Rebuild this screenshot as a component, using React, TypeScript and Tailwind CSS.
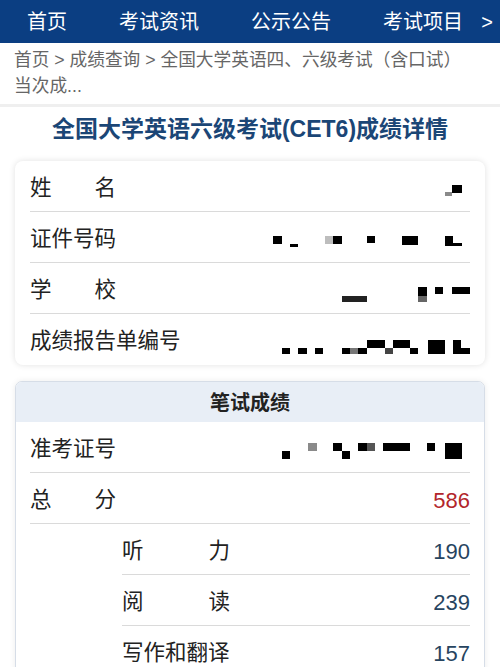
import React from "react";

type Block = [number, number, number, number, string?];

const nav = ["首页", "考试资讯", "公示公告", "考试项目"];

// pixelated (masked) values, coords inside a 200x24 box
const masks: Record<string, Block[]> = {
  name: [
    [175, 16, 7, 4, "#8a8a8a"],
    [182, 9, 10, 8],
  ],
  id: [
    [3, 9, 9, 8],
    [20, 17, 8, 3],
    [55, 9, 8, 8, "#bdbdbd"],
    [63, 9, 9, 8],
    [97, 9, 8, 7],
    [132, 9, 16, 9],
    [175, 9, 8, 10],
    [183, 16, 9, 3],
  ],
  school: [
    [72, 18, 25, 6, "#222"],
    [148, 9, 9, 9],
    [148, 18, 9, 6, "#666"],
    [165, 9, 8, 7],
    [182, 9, 18, 7],
  ],
  report: [
    [12, 18, 8, 7],
    [28, 18, 9, 7],
    [45, 18, 8, 7],
    [72, 18, 8, 7],
    [80, 18, 8, 7, "#777"],
    [88, 18, 9, 7],
    [97, 10, 18, 8],
    [115, 18, 8, 7, "#444"],
    [123, 10, 17, 8],
    [140, 18, 8, 7],
    [158, 10, 17, 15],
    [183, 10, 8, 15],
    [191, 18, 9, 7],
  ],
  ticket: [
    [12, 14, 8, 8],
    [38, 6, 9, 8, "#8a8a8a"],
    [63, 6, 9, 8],
    [72, 14, 8, 8],
    [88, 6, 9, 8],
    [97, 6, 8, 8, "#555"],
    [113, 6, 27, 8],
    [157, 6, 8, 8],
    [175, 6, 17, 16],
  ],
};

function Mask({ blocks }: { blocks: Block[] }) {
  return (
    <svg width="200" height="24" viewBox="0 0 200 24" className="ml-auto shrink-0">
      {blocks.map(([x, y, w, h, c], i) => (
        <rect key={i} x={x} y={y} width={w} height={h} fill={c ?? "#000"} />
      ))}
    </svg>
  );
}

function Spread({ a, b, wide }: { a: string; b: string; wide?: boolean }) {
  return (
    <span className={wide ? "flex w-[108px] justify-between" : "flex w-[86px] justify-between"}>
      <span>{a}</span>
      <span>{b}</span>
    </span>
  );
}

function Row({ children, last }: { children: React.ReactNode; last?: boolean }) {
  return (
    <div
      className={
        "flex h-[51px] items-center pt-[4px] text-[21.5px] text-[#222] " +
        (last ? "" : "border-b border-[#dadada]")
      }
    >
      {children}
    </div>
  );
}

export default function App() {
  return (
    <div className="h-[667px] w-[500px] overflow-hidden bg-white font-['Liberation_Sans','Noto_Sans_CJK_SC',sans-serif]">
      {/* top nav */}
      <div className="flex h-[43px] items-center bg-[#0b3e82] pl-[27px] pr-[7px] text-[20px] text-white">
        <div className="flex gap-[52px]">
          {nav.map((n) => (
            <span key={n}>{n}</span>
          ))}
        </div>
        <span className="ml-auto">&gt;</span>
      </div>

      {/* breadcrumb */}
      <div className="px-[14px] pt-[4px] pb-[5px] text-[17.7px] leading-[26px] text-[#666]">
        <div className="whitespace-nowrap">首页 &gt; 成绩查询 &gt; 全国大学英语四、六级考试（含口试）</div>
        <div>当次成...</div>
      </div>
      <div className="h-[3px] bg-[#efefef]" />

      <h1 className="mt-[7px] mb-[17px] text-center text-[23px] font-bold leading-[30px] text-[#1b4676]">
        全国大学英语六级考试(CET6)成绩详情
      </h1>

      {/* personal info */}
      <div className="mx-[15px] rounded-[8px] bg-white px-[15px] shadow-[0_0_6px_rgba(0,0,0,0.12)]">
        <Row>
          <Spread a="姓" b="名" />
          <Mask blocks={masks.name} />
        </Row>
        <Row>
          <span>证件号码</span>
          <Mask blocks={masks.id} />
        </Row>
        <Row>
          <Spread a="学" b="校" />
          <Mask blocks={masks.school} />
        </Row>
        <Row last>
          <span>成绩报告单编号</span>
          <Mask blocks={masks.report} />
        </Row>
      </div>

      {/* written exam */}
      <div className="mx-[15px] mt-[16px] overflow-hidden rounded-[7px] border border-[#d6dde7] bg-white shadow-[0_0_6px_rgba(0,0,0,0.08)]">
        <div className="flex h-[40px] items-center justify-center bg-[#e8eef6] pt-[2px] text-[20px] font-bold text-[#222]">
          笔试成绩
        </div>
        <div className="px-[14px]">
          <Row>
            <span>准考证号</span>
            <Mask blocks={masks.ticket} />
          </Row>
          <Row>
            <Spread a="总" b="分" />
            <span className="ml-auto text-[22px] text-[#b3262b]">586</span>
          </Row>
          <div className="ml-[92px]">
            <Row>
              <Spread a="听" b="力" wide />
              <span className="ml-auto text-[22px] text-[#27445f]">190</span>
            </Row>
            <Row>
              <Spread a="阅" b="读" wide />
              <span className="ml-auto text-[22px] text-[#27445f]">239</span>
            </Row>
            <Row>
              <span>写作和翻译</span>
              <span className="ml-auto text-[22px] text-[#27445f]">157</span>
            </Row>
          </div>
        </div>
      </div>
    </div>
  );
}
